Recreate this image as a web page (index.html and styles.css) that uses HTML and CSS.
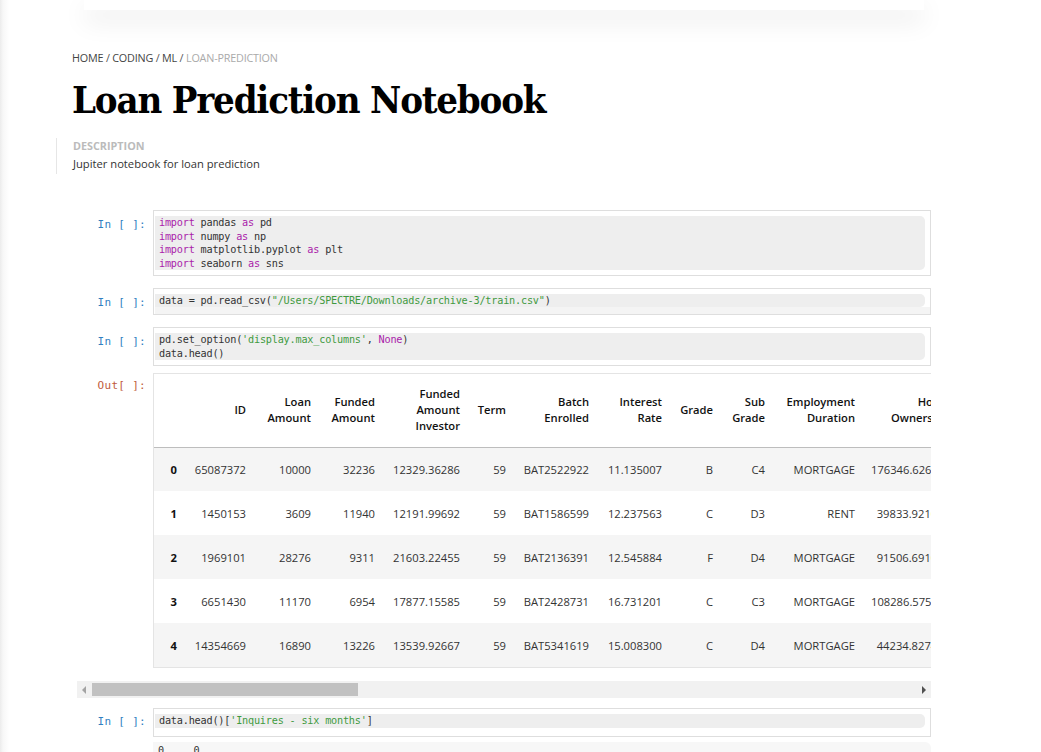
FILE: index.html
```html
<!DOCTYPE html>
<html lang="en">
<head>
<meta charset="utf-8">
<title>Loan Prediction Notebook</title>
<link rel="stylesheet" href="styles.css">
</head>
<body>
<div class="topbar"></div>
<main class="page">
  <nav class="crumbs"><a href="#">HOME</a> / <a href="#">CODING</a> / <a href="#">ML</a> / <span class="cur">LOAN-PREDICTION</span></nav>
  <h1 class="title">Loan Prediction Notebook</h1>
  <div class="desc">
    <div class="desc-label">DESCRIPTION</div>
    <div class="desc-text">Jupiter notebook for loan prediction</div>
  </div>

  <div class="notebook">
    <div class="cell">
      <div class="prompt in">In [ ]:</div>
      <div class="input tall"><pre class="code"><span class="kw">import</span> pandas <span class="kw">as</span> pd
<span class="kw">import</span> numpy <span class="kw">as</span> np
<span class="kw">import</span> matplotlib.pyplot <span class="kw">as</span> plt
<span class="kw">import</span> seaborn <span class="kw">as</span> sns</pre></div>
    </div>

    <div class="cell">
      <div class="prompt in">In [ ]:</div>
      <div class="input scrolled"><pre class="code">data = pd.read_csv(<span class="str">"/Users/SPECTRE/Downloads/archive-3/train.csv"</span>)</pre><div class="code-scroll"></div></div>
    </div>

    <div class="cell">
      <div class="prompt in">In [ ]:</div>
      <div class="input"><pre class="code">pd.set_option(<span class="str">'display.max_columns'</span>, <span class="kw">None</span>)
data.head()</pre></div>
    </div>

    <div class="cell out-cell">
      <div class="prompt out">Out[ ]:</div>
      <div class="output">
        <table class="df">
          <colgroup><col><col><col><col><col><col><col><col><col><col><col><col><col><col></colgroup>
          <thead>
            <tr><th></th><th>ID</th><th>Loan<br>Amount</th><th>Funded<br>Amount</th><th>Funded<br>Amount<br>Investor</th><th>Term</th><th>Batch<br>Enrolled</th><th>Interest<br>Rate</th><th>Grade</th><th>Sub<br>Grade</th><th>Employment<br>Duration</th><th>Home<br>Ownership</th><th>Verification<br>Status</th><th>Payment<br>Plan</th></tr>
          </thead>
          <tbody>
            <tr><th>0</th><td>65087372</td><td>10000</td><td>32236</td><td>12329.36286</td><td>59</td><td>BAT2522922</td><td>11.135007</td><td>B</td><td>C4</td><td>MORTGAGE</td><td>176346.626700</td><td>Not Verified</td><td>n</td></tr>
            <tr><th>1</th><td>1450153</td><td>3609</td><td>11940</td><td>12191.99692</td><td>59</td><td>BAT1586599</td><td>12.237563</td><td>C</td><td>D3</td><td>RENT</td><td>39833.921000</td><td>Source Verified</td><td>n</td></tr>
            <tr><th>2</th><td>1969101</td><td>28276</td><td>9311</td><td>21603.22455</td><td>59</td><td>BAT2136391</td><td>12.545884</td><td>F</td><td>D4</td><td>MORTGAGE</td><td>91506.691000</td><td>Source Verified</td><td>n</td></tr>
            <tr><th>3</th><td>6651430</td><td>11170</td><td>6954</td><td>17877.15585</td><td>59</td><td>BAT2428731</td><td>16.731201</td><td>C</td><td>C3</td><td>MORTGAGE</td><td>108286.575900</td><td>Source Verified</td><td>n</td></tr>
            <tr><th>4</th><td>14354669</td><td>16890</td><td>13226</td><td>13539.92667</td><td>59</td><td>BAT5341619</td><td>15.008300</td><td>C</td><td>D4</td><td>MORTGAGE</td><td>44234.827400</td><td>Source Verified</td><td>n</td></tr>
          </tbody>
        </table>
      </div>
    </div>

    <div class="hscroll">
      <span class="arrow left"></span>
      <div class="track"><div class="thumb"></div></div>
      <span class="arrow right"></span>
    </div>

    <div class="cell last">
      <div class="prompt in">In [ ]:</div>
      <div class="input"><pre class="code">data.head()[<span class="str">'Inquires - six months'</span>]</pre></div>
    </div>

    <div class="cell result">
      <div class="prompt"></div>
      <pre class="stream">0     0</pre>
    </div>
  </div>
</main>
</body>
</html>
```
FILE: styles.css
```css
html, body {
  margin: 0;
  padding: 0;
}
body {
  background: linear-gradient(to right, #ececec 0, #f7f7f7 3px, #ffffff 9px);
  font-family: "Open Sans", "Noto Sans", sans-serif;
  color: #333;
  height: 752px;
  overflow: hidden;
}
.topbar {
  height: 10px;
  width: 840px;
  margin-left: 84px;
  background: #fff;
  box-shadow: 0 10px 26px rgba(0, 0, 0, 0.11);
}
.page {
  width: 859px;
  margin-left: 72px;
}
.crumbs {
  margin-top: 41px;
  font-size: 10.8px;
  line-height: 14px;
  color: #555;
  letter-spacing: -0.2px;
}
.crumbs a {
  color: #444;
  text-decoration: none;
}
.crumbs .cur {
  color: #aaa;
}
.title {
  margin: 11px 0 0 0;
  font-family: "DejaVu Serif", serif;
  font-stretch: condensed;
  font-weight: bold;
  font-size: 38px;
  line-height: 48px;
  color: #000;
  letter-spacing: -1.2px;
}
.desc {
  margin: 14px 0 0 -16px;
  padding-left: 16px;
  border-left: 1px solid #e6e6e6;
}
.desc-label {
  font-size: 10.8px;
  line-height: 16px;
  font-weight: bold;
  color: #bbb;
}
.desc-text {
  font-size: 11.2px;
  line-height: 20px;
  color: #333;
}
.notebook {
  margin: 36px 0 0 5px;
  width: 854px;
}
.cell {
  display: flex;
  align-items: flex-start;
  margin-bottom: 12px;
}
.prompt {
  flex: 0 0 76px;
  box-sizing: border-box;
  padding-right: 7px;
  text-align: right;
  font-family: "DejaVu Sans Mono", monospace;
  font-size: 11px;
  letter-spacing: 0.3px;
  line-height: 14px;
  padding-top: 8px;
  white-space: pre;
}
.prompt.in { color: #307fc1; }
.prompt.out { color: #bf5b3d; padding-top: 6px; }
.input {
  flex: 1;
  border: 1px solid #dedede;
  padding: 5px 5px 5px 1px;
  min-width: 0;
}
.input.tall .code { line-height: 13.5px; }
.input.scrolled { padding-bottom: 0; }
.code {
  margin: 0;
  background: #eeeeee;
  border-radius: 0 5px 5px 0;
  padding: 0 4px;
  font-family: "DejaVu Sans Mono", monospace;
  font-size: 10.2px;
  letter-spacing: -0.2px;
  line-height: 13.3px;
  color: #333;
}
.code-scroll {
  height: 7px;
  background: #f4f4f4;
  margin-right: -5px;
}
.kw { color: #aa22aa; }
.str { color: #3f9a3f; }

.out-cell {
  margin-top: -5px;
  margin-bottom: 0;
}
.output {
  flex: 1;
  min-width: 0;
  overflow: hidden;
  border-top: 1px solid #e4e4e4;
  border-left: 1px solid #e4e4e4;
  border-bottom: 1px solid #e4e4e4;
}
.df {
  border-collapse: collapse;
  table-layout: fixed;
  width: 994px;
  font-family: "Open Sans", "Noto Sans", sans-serif;
  font-size: 11.2px;
  color: #333;
}
.df col:nth-child(1) { width: 31px; }
.df col:nth-child(2) { width: 69px; }
.df col:nth-child(3) { width: 65px; }
.df col:nth-child(4) { width: 64px; }
.df col:nth-child(5) { width: 85px; }
.df col:nth-child(6) { width: 46px; }
.df col:nth-child(7) { width: 83px; }
.df col:nth-child(8) { width: 73px; }
.df col:nth-child(9) { width: 51px; }
.df col:nth-child(10) { width: 52px; }
.df col:nth-child(11) { width: 90px; }
.df col:nth-child(12) { width: 95px; }
.df col:nth-child(13) { width: 110px; }
.df col:nth-child(14) { width: 80px; }
.df th, .df td {
  padding: 0 8px;
  text-align: right;
  white-space: nowrap;
  overflow: visible;
}
.df thead th {
  height: 73px;
  line-height: 16px;
  font-weight: 600;
  color: #111;
  border-bottom: 1px solid #bdbdbd;
}
.df tbody tr { height: 44px; }
.df tbody tr:nth-child(odd) { background: #f5f5f5; }
.df tbody th {
  font-weight: 700;
  color: #111;
}

.hscroll {
  display: flex;
  align-items: center;
  height: 17px;
  background: #f1f1f1;
  margin-top: 13px;
  margin-bottom: 10px;
}
.arrow {
  width: 0;
  height: 0;
  border-top: 4px solid transparent;
  border-bottom: 4px solid transparent;
  flex: 0 0 auto;
}
.arrow.left {
  border-right: 4px solid #a3a3a3;
  margin: 0 6px 0 5px;
}
.arrow.right {
  border-left: 4px solid #505050;
  margin: 0 5px 0 6px;
}
.track {
  flex: 1;
  height: 13px;
}
.thumb {
  width: 266px;
  height: 13px;
  background: #c1c1c1;
}
.cell.last { margin-bottom: 5px; }
.cell.last .prompt { padding-top: 7px; }
.cell.last .input { padding-bottom: 8px; }
.result .prompt { padding-top: 0; }
.stream {
  flex: 1;
  margin: 0;
  background: #f7f7f7;
  border-radius: 0 6px 0 0;
  padding: 2px 5px;
  font-family: "DejaVu Sans Mono", monospace;
  font-size: 10.2px;
  letter-spacing: -0.2px;
  line-height: 13.3px;
  color: #333;
}
```
